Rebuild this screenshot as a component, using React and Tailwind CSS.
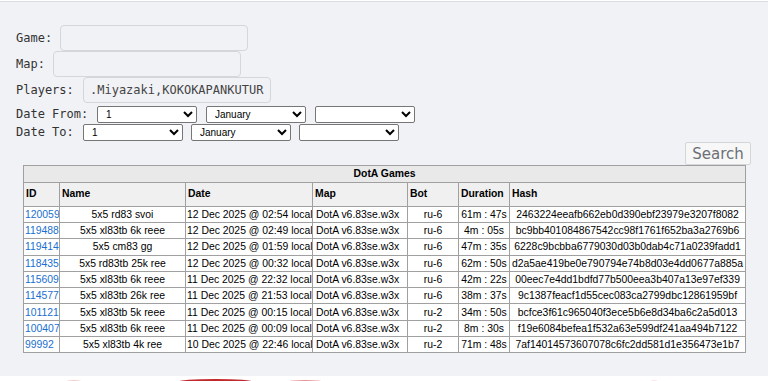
import React from 'react';

const games = [
  { id: '120059', name: '5x5 rd83 svoi', date: '12 Dec 2025 @ 02:54 local', bot: 'ru-6', dur: '61m : 47s', hash: '2463224eeafb662eb0d390ebf23979e3207f8082' },
  { id: '119488', name: '5x5 xl83tb 6k reee', date: '12 Dec 2025 @ 02:49 local', bot: 'ru-6', dur: '4m : 05s', hash: 'bc9bb401084867542cc98f1761f652ba3a2769b6' },
  { id: '119414', name: '5x5 cm83 gg', date: '12 Dec 2025 @ 01:59 local', bot: 'ru-6', dur: '47m : 35s', hash: '6228c9bcbba6779030d03b0dab4c71a0239fadd1' },
  { id: '118435', name: '5x5 rd83tb 25k ree', date: '12 Dec 2025 @ 00:32 local', bot: 'ru-6', dur: '62m : 50s', hash: 'd2a5ae419be0e790794e74b8d03e4dd0677a885a' },
  { id: '115609', name: '5x5 xl83tb 6k reee', date: '11 Dec 2025 @ 22:32 local', bot: 'ru-6', dur: '42m : 22s', hash: '00eec7e4dd1bdfd77b500eea3b407a13e97ef339' },
  { id: '114577', name: '5x5 xl83tb 26k ree', date: '11 Dec 2025 @ 21:53 local', bot: 'ru-6', dur: '38m : 37s', hash: '9c1387feacf1d55cec083ca2799dbc12861959bf' },
  { id: '101121', name: '5x5 xl83tb 5k reee', date: '11 Dec 2025 @ 00:15 local', bot: 'ru-2', dur: '34m : 50s', hash: 'bcfce3f61c965040f3ece5b6e8d34ba6c2a5d013' },
  { id: '100407', name: '5x5 xl83tb 6k reee', date: '11 Dec 2025 @ 00:09 local', bot: 'ru-2', dur: '8m : 30s', hash: 'f19e6084befea1f532a63e599df241aa494b7122' },
  { id: '99992', name: '5x5 xl83tb 4k ree', date: '10 Dec 2025 @ 22:46 local', bot: 'ru-2', dur: '71m : 48s', hash: '7af14014573607078c6fc2dd581d1e356473e1b7' },
];

const Select = ({ value }) => (
  <select
    defaultValue={value}
    className="w-[100px] h-[17px] bg-white border border-[#767676] rounded-[2px] text-[10px] text-black pl-[4px] font-['Liberation_Sans',sans-serif]"
    style={{ appearance: 'auto' }}
  >
    <option value={value}>{value}</option>
  </select>
);

const Field = ({ label, value, gap }) => (
  <div className="flex items-center h-[26px]">
    <span className={gap}>{label}</span>
    <input
      readOnly
      value={value || ''}
      className="w-[188px] h-[26px] rounded-[4px] border border-[#d4d6da] bg-[#f1f2f6] px-[6px] text-[12px] text-[#444] font-['DejaVu_Sans_Mono',monospace] outline-none"
    />
  </div>
);

const th = 'border border-[#a0a0a0] bg-[#f0f0f0] text-left font-bold px-[2px]';
const td = 'border border-[#a0a0a0] px-[1px] whitespace-nowrap overflow-hidden';

export default function App() {
  return (
    <div className="w-[768px] h-[381px] bg-white overflow-hidden flex flex-col">
      <div className="h-[376px] bg-[#f1f2f6] border-t border-[#dcdde2] mt-[1px] flex flex-col">
        <div className="pl-[16px] pt-[23px] text-[12px] text-[#333] font-['DejaVu_Sans_Mono',monospace] flex flex-col">
          <Field label="Game:" gap="w-[44px]" />
          <Field label="Map:" gap="w-[37px]" />
          <Field label="Players:" gap="w-[67px]" value=".Miyazaki,KOKOKAPANKUTUR" />
          <div className="flex items-center h-[18px] mt-[2px]">
            <span className="w-[81px]">Date From:</span>
            <div className="flex gap-[9px]">
              <Select value="1" />
              <Select value="January" />
              <Select value="" />
            </div>
          </div>
          <div className="flex items-center h-[18px]">
            <span className="w-[67px]">Date To:</span>
            <div className="flex gap-[8px]">
              <Select value="1" />
              <Select value="January" />
              <Select value="" />
            </div>
          </div>
        </div>
        <div className="flex justify-end pr-[17px] mt-[1px]">
          <button className="w-[66px] h-[23px] bg-[#f7f7f8] border border-[#d5d6da] rounded-[2px] text-[15px] text-[#6b6f76] font-['DejaVu_Sans',sans-serif]">
            Search
          </button>
        </div>
        <div className="pl-[23px]">
          <table className="w-[722px] table-fixed border-collapse border border-[#8a8a8a] text-[10.4px] text-black font-['Liberation_Sans',Arial,sans-serif] bg-white">
            <colgroup>
              <col className="w-[36px]" />
              <col className="w-[126px]" />
              <col className="w-[127px]" />
              <col className="w-[95px]" />
              <col className="w-[51px]" />
              <col className="w-[51px]" />
              <col className="w-[236px]" />
            </colgroup>
            <thead>
              <tr className="h-[16px]">
                <th colSpan={7} className="border border-[#a0a0a0] bg-[#e9e9e9] font-bold text-center">DotA Games</th>
              </tr>
              <tr className="h-[24px]">
                <th className={th}>ID</th>
                <th className={th}>Name</th>
                <th className={th}>Date</th>
                <th className={th}>Map</th>
                <th className={th}>Bot</th>
                <th className={th}>Duration</th>
                <th className={th}>Hash</th>
              </tr>
            </thead>
            <tbody>
              {games.map((g) => (
                <tr key={g.id} className="h-[16.3px] leading-[15px]">
                  <td className={`${td} text-[#1a6fd0]`}>{g.id}</td>
                  <td className={`${td} text-center`}>{g.name}</td>
                  <td className={td}>{g.date}</td>
                  <td className={`${td} px-[3px]`}>DotA v6.83se.w3x</td>
                  <td className={`${td} text-center`}>{g.bot}</td>
                  <td className={`${td} text-center`}>{g.dur}</td>
                  <td className={`${td} text-center`}>{g.hash}</td>
                </tr>
              ))}
            </tbody>
          </table>
        </div>
      </div>
      <svg width="768" height="5" viewBox="0 0 768 5" className="block">
        <ellipse cx="73" cy="6" rx="8" ry="2" fill="#f3cccc" />
        <ellipse cx="215" cy="6" rx="38" ry="3" fill="#c3282c" />
        <ellipse cx="305" cy="6" rx="20" ry="1.8" fill="#dd6a6c" />
        <ellipse cx="655" cy="6" rx="5" ry="1.5" fill="#f5c6d2" />
      </svg>
    </div>
  );
}
